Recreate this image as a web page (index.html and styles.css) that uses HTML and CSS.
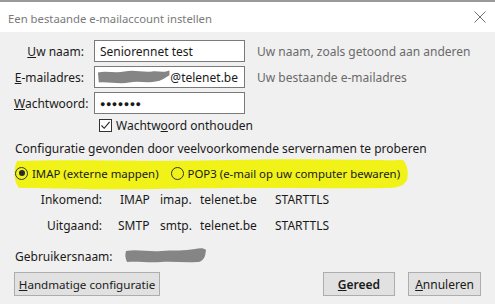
FILE: index.html
```html
<!DOCTYPE html>
<html lang="nl">
<head>
    <meta charset="UTF-8">
    <link rel="stylesheet" href="styles.css">
    <title>Een bestaande e-mailaccount instellen</title>
</head>
<body>
    <header class="titlebar">
        <span class="title">Een bestaande e-mailaccount instellen</span>
        <svg class="close" width="12" height="12" viewBox="0 0 12 12">
            <path d="M0.5 0.5 L11.5 11.5 M11.5 0.5 L0.5 11.5" stroke="#6f6f6f" stroke-width="1" fill="none"/>
        </svg>
    </header>
    <main class="dialog">
        <div class="fields">
            <label class="field-label" for="name"><u>U</u>w naam:</label>
            <div class="input"><span>Seniorennet test</span></div>
            <span class="hint">Uw naam, zoals getoond aan anderen</span>

            <label class="field-label" for="email"><u>E</u>-mailadres:</label>
            <div class="input input-email">
                <svg class="scribble" width="80" height="16" viewBox="0 0 80 16">
                    <path d="M1 3 C10 1 20 4 30 2 C40 0 50 3 60 2 C66 1 72 4 79 1 L79 6 C74 9 70 12 64 13 C55 15 45 12 35 14 C25 16 12 13 2 14 Z" fill="#858585"/>
                </svg>
                <span class="email-domain">@telenet.be</span>
            </div>
            <span class="hint">Uw bestaande e-mailadres</span>

            <label class="field-label" for="pass"><u>W</u>achtwoord:</label>
            <div class="input"><span class="dots">&#9679;&#9679;&#9679;&#9679;&#9679;&#9679;&#9679;</span></div>
            <span></span>
        </div>

        <div class="remember">
            <span class="checkbox">
                <svg width="11" height="11" viewBox="0 0 11 11">
                    <path d="M1.5 5.5 L4.2 8.3 L9.6 1.8" stroke="#222" stroke-width="1.1" fill="none"/>
                </svg>
            </span>
            <span>Wachtw<u>o</u>ord onthouden</span>
        </div>

        <p class="config-note">Configuratie gevonden door veelvoorkomende servernamen te proberen</p>

        <div class="protocols">
            <svg class="marker" width="398" height="32" viewBox="0 0 400 32" preserveAspectRatio="none">
                <path d="M4 3 C60 1 140 4 220 2 C300 0 360 3 392 2 C396 6 398 14 396 22 C393 27 390 29 380 30 C300 31 220 29 140 31 C80 32 30 30 6 30 C1 24 0 12 4 3 Z" fill="#f0f218"/>
            </svg>
            <span class="radio checked"></span>
            <span class="radio-label">IMAP (externe mappen)</span>
            <span class="radio"></span>
            <span class="radio-label">POP3 (e-mail op uw computer bewaren)</span>
        </div>

        <div class="servers">
            <span class="server-label">Inkomend:</span>
            <span>IMAP</span>
            <span>imap.</span>
            <span>telenet.be</span>
            <span>STARTTLS</span>

            <span class="server-label">Uitgaand:</span>
            <span class="smtp">SMTP</span>
            <span>smtp.</span>
            <span>telenet.be</span>
            <span>STARTTLS</span>
        </div>

        <div class="username">
            <span>Gebruikersnaam:</span>
            <svg width="82" height="18" viewBox="0 0 82 18">
                <path d="M1 4 C12 2 24 5 36 4 C48 3 60 4 70 2 C75 1 79 1 81 3 L80 9 C78 13 76 15 72 15 C60 16 48 14 36 15 C24 16 12 14 2 15 C0 11 0 7 1 4 Z" fill="#858585"/>
            </svg>
        </div>

        <div class="buttons">
            <button class="btn btn-manual"><u>H</u>andmatige configuratie</button>
            <span class="spacer"></span>
            <button class="btn btn-default"><u>G</u>ereed</button>
            <button class="btn"><u>A</u>nnuleren</button>
        </div>
    </main>
</body>
</html>
```

FILE: styles.css
```css
body {
  margin: 0;
  background: #f0f0f0;
  font-family: "Noto Sans", "Open Sans", sans-serif;
  font-size: 12px;
  color: #1a1a1a;
}

.titlebar {
  height: 30px;
  background: #fff;
  border-top: 2px solid #9a9a9a;
  display: flex;
  align-items: center;
  justify-content: space-between;
  padding: 0 9px 0 8px;
}

.title {
  color: #7a7a7a;
  font-size: 11.3px;
  padding-top: 2px;
}

.dialog {
  padding: 8px 14px 0 14px;
}

.fields {
  display: grid;
  grid-template-columns: 70px 151px auto;
  column-gap: 10px;
  row-gap: 4px;
  align-items: center;
}

.field-label {
  text-align: right;
}

.input {
  height: 20px;
  border: 1px solid #7a7a7a;
  background: #fff;
  display: flex;
  align-items: center;
  padding: 0 5px;
  white-space: nowrap;
  overflow: hidden;
}

.input-email {
  padding: 0 6px 0 2px;
  justify-content: space-between;
}

.dots {
  font-size: 9px;
  letter-spacing: 0.5px;
}

.hint {
  color: #6a6a6a;
  padding-left: 2px;
}

.remember {
  display: flex;
  align-items: center;
  gap: 4px;
  margin: 5px 0 0 85px;
  height: 13px;
}

.checkbox {
  width: 11px;
  height: 11px;
  border: 1px solid #333;
  background: #fff;
  display: flex;
}

.config-note {
  margin: 9px 0 0 1px;
  line-height: 16px;
}

.protocols {
  position: relative;
  display: flex;
  align-items: center;
  height: 30px;
  margin-top: 1px;
  padding-left: 1px;
  font-size: 11.4px;
}

.marker {
  position: absolute;
  left: -1px;
  top: 0;
  z-index: 0;
}

.radio {
  position: relative;
  width: 11px;
  height: 11px;
  border: 1px solid #333;
  border-radius: 50%;
  background: transparent;
  margin-right: 4px;
}

.radio.checked::after {
  content: "";
  position: absolute;
  left: 2.5px;
  top: 2.5px;
  width: 6px;
  height: 6px;
  border-radius: 50%;
  background: #2a2a2a;
}

.radio-label {
  position: relative;
  margin-right: 12px;
}

.servers {
  display: grid;
  grid-template-columns: 106px 40px 40px 75px auto;
  row-gap: 10px;
  margin-top: 4px;
  line-height: 16px;
}

.server-label {
  text-align: right;
  padding-right: 18px;
}

.smtp {
  margin-left: -2px;
}

.username {
  display: flex;
  align-items: center;
  gap: 12px;
  margin-top: 13px;
  padding-left: 1px;
}

.buttons {
  display: flex;
  gap: 13px;
  margin-top: 7px;
}

.spacer {
  flex: 1;
}

.btn {
  height: 24px;
  width: 73px;
  border: 1px solid #adadad;
  background: #e1e1e1;
  font-family: inherit;
  font-size: 12px;
  color: #1a1a1a;
  padding: 0;
}

.btn-manual {
  width: 146px;
  font-size: 11.6px;
}

.btn-default {
  width: 72px;
  font-weight: 600;
}
```
